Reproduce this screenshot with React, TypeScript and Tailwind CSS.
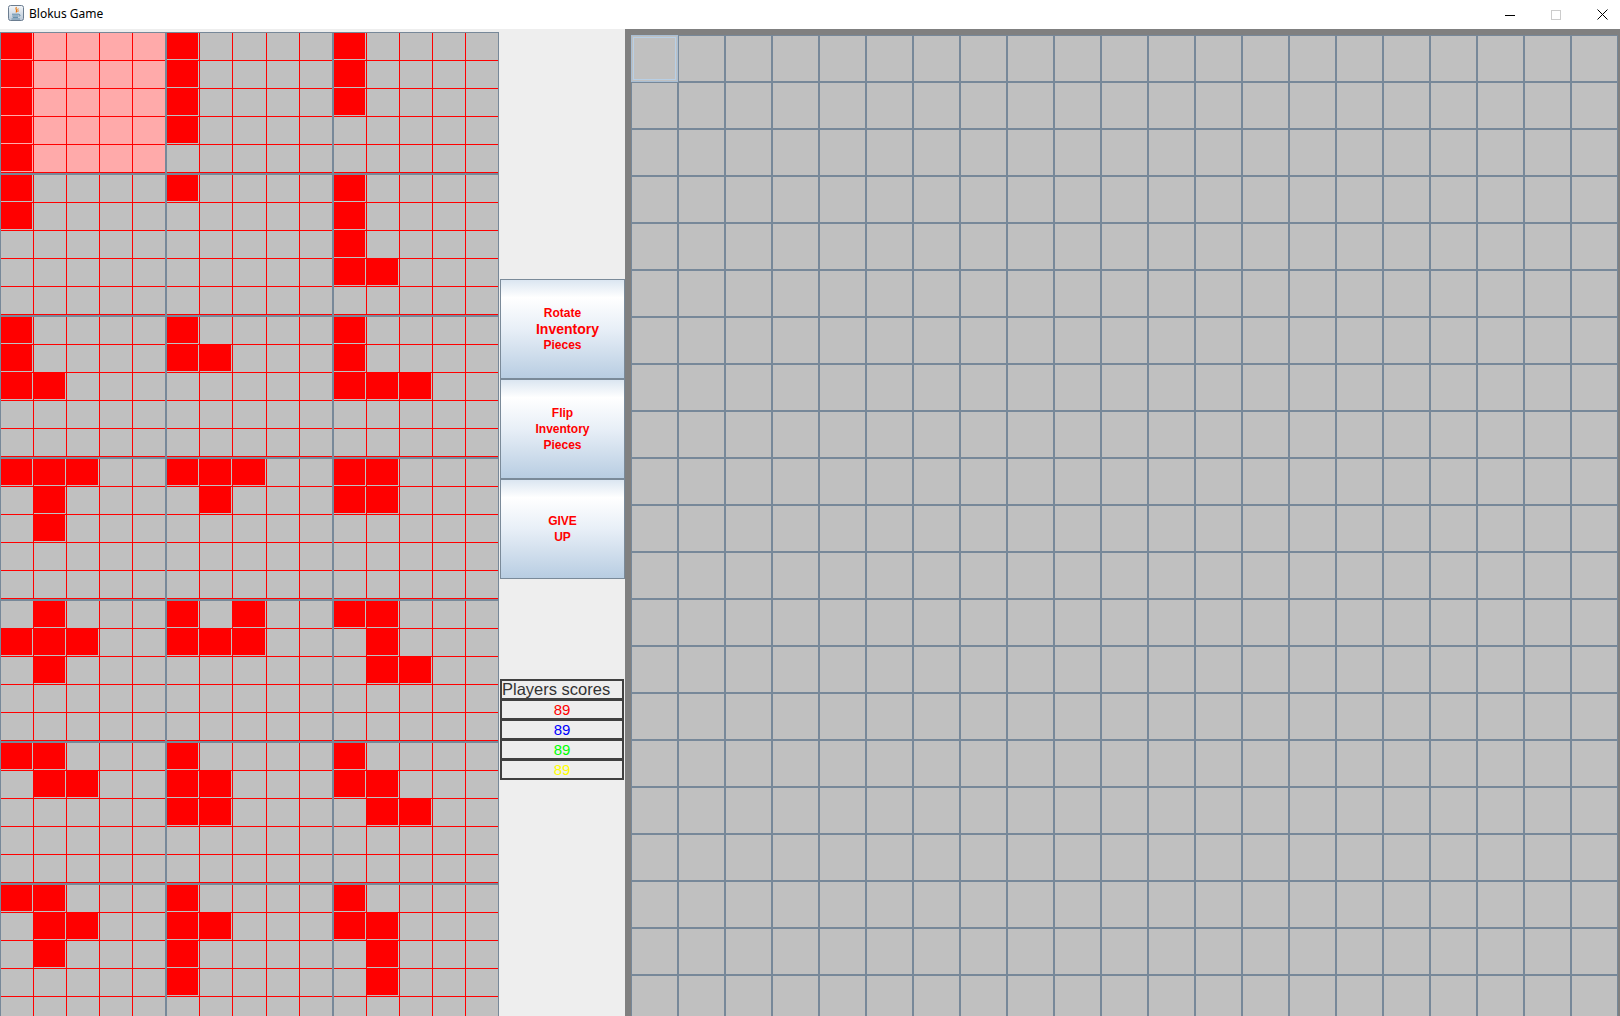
import React from "react";

const pieces: number[][][] = [
  [[0, 0], [1, 0], [2, 0], [3, 0], [4, 0]],
  [[0, 0], [1, 0], [2, 0], [3, 0]],
  [[0, 0], [1, 0], [2, 0]],
  [[0, 0], [1, 0]],
  [[0, 0]],
  [[0, 0], [1, 0], [2, 0], [3, 0], [3, 1]],
  [[0, 0], [1, 0], [2, 0], [2, 1]],
  [[0, 0], [1, 0], [1, 1]],
  [[0, 0], [1, 0], [2, 0], [2, 1], [2, 2]],
  [[0, 0], [0, 1], [0, 2], [1, 1], [2, 1]],
  [[0, 0], [0, 1], [0, 2], [1, 1]],
  [[0, 0], [0, 1], [1, 0], [1, 1]],
  [[0, 1], [1, 0], [1, 1], [1, 2], [2, 1]],
  [[0, 0], [0, 2], [1, 0], [1, 1], [1, 2]],
  [[0, 0], [0, 1], [1, 1], [2, 1], [2, 2]],
  [[0, 0], [0, 1], [1, 1], [1, 2]],
  [[0, 0], [1, 0], [1, 1], [2, 0], [2, 1]],
  [[0, 0], [1, 0], [1, 1], [2, 1], [2, 2]],
  [[0, 0], [0, 1], [1, 1], [1, 2], [2, 1]],
  [[0, 0], [1, 0], [1, 1], [2, 0], [3, 0]],
  [[0, 0], [1, 0], [1, 1], [2, 1], [3, 1]],
];

function Block({ cells, selected }: { cells: number[][]; selected: boolean }) {
  const set = new Set(cells.map(([r, c]) => r * 5 + c));
  return (
    <div className="border border-[#778899] grid grid-cols-5 grid-rows-5 gap-x-px bg-[#ff0000] overflow-hidden">
      {Array.from({ length: 25 }).map((_, i) => (
        <div
          key={i}
          className={
            "flex border-b border-[#ff0000] " +
            (selected ? "bg-[#ffaaaa]" : "bg-[#c0c0c0]")
          }
        >
          {set.has(i) && <div className="flex-1 mr-px mb-px bg-[#ff0000]" />}
        </div>
      ))}
    </div>
  );
}

function JavaIcon() {
  return (
    <svg width="16" height="16" viewBox="0 0 16 16">
      <defs>
        <linearGradient id="jg" x1="0" y1="0" x2="0" y2="1">
          <stop offset="0" stopColor="#f4f7fa" />
          <stop offset="1" stopColor="#b9c7d6" />
        </linearGradient>
      </defs>
      <rect x="0.5" y="0.5" width="15" height="15" rx="2" fill="url(#jg)" stroke="#6b7d90" />
      <path d="M8.5 2.2 C6.5 4, 10 5, 8 7.5" stroke="#e76f00" strokeWidth="1.1" fill="none" />
      <path d="M10.2 3.5 C9 5, 11 5.5, 9.6 7" stroke="#e76f00" strokeWidth="0.9" fill="none" />
      <path d="M4 9.2 h7 M11 9.5 c1.5 0 1.5 1.6 0 1.6" stroke="#5382a1" strokeWidth="0.9" fill="none" />
      <path d="M4.3 11 h6.2 M4.8 12.6 h5.2" stroke="#5382a1" strokeWidth="0.9" />
      <path d="M3.5 14 h8.5" stroke="#5382a1" strokeWidth="0.8" />
    </svg>
  );
}

function Btn({ children }: { children: React.ReactNode }) {
  return (
    <div className="h-[100px] w-[125px] border border-[#7a8a99] bg-[linear-gradient(to_bottom,#dbe6f1_0%,#ffffff_18%,#e8eff7_50%,#b8cde2_100%)] flex flex-col items-center justify-center text-[#ff0000] font-['Liberation_Sans',Arial,sans-serif] font-bold text-[12px] leading-[16px]">
      {children}
    </div>
  );
}

export default function App() {
  const scores = [
    { v: "89", c: "text-[#ff0000]" },
    { v: "89", c: "text-[#0000ff]" },
    { v: "89", c: "text-[#00ff00]" },
    { v: "89", c: "text-[#ffff00]" },
  ];
  return (
    <div className="w-[1620px] h-[1016px] overflow-hidden bg-white flex flex-col">
      <div className="h-[29px] shrink-0 bg-white flex items-center">
        <div className="ml-[8px] -mt-[3px]">
          <JavaIcon />
        </div>
        <div className="ml-[5px] -mt-[1px] text-[12px] text-black font-['Noto_Sans',sans-serif]">
          Blokus Game
        </div>
        <div className="ml-auto mr-[-5px] flex h-full">
          <div className="w-[46px] h-full flex items-center justify-center">
            <svg width="10" height="10" viewBox="0 0 10 10">
              <path d="M0 5.5 H10" stroke="#000" strokeWidth="1" />
            </svg>
          </div>
          <div className="w-[46px] h-full flex items-center justify-center">
            <svg width="10" height="10" viewBox="0 0 10 10">
              <rect x="0.5" y="0.5" width="9" height="9" fill="none" stroke="#cccccc" strokeWidth="1" />
            </svg>
          </div>
          <div className="w-[46px] h-full flex items-center justify-center">
            <svg width="11" height="11" viewBox="0 0 11 11">
              <path d="M0.5 0.5 L10.5 10.5 M10.5 0.5 L0.5 10.5" stroke="#000" strokeWidth="1" />
            </svg>
          </div>
        </div>
      </div>

      <div className="flex-1 min-h-0 flex bg-[#eeeeee] overflow-hidden">
        <div className="w-[499px] shrink-0 pt-[3px]">
          <div className="grid grid-cols-3 grid-rows-[repeat(7,142px)]">
            {pieces.map((p, i) => (
              <Block key={i} cells={p} selected={i === 0} />
            ))}
          </div>
        </div>

        <div className="w-[126px] shrink-0 flex flex-col pt-[250px] pl-[1px]">
          <Btn>
            <span>Rotate</span>
            <span className="text-[14px] pl-[10px]">Inventory</span>
            <span>Pieces</span>
          </Btn>
          <Btn>
            <span>Flip</span>
            <span>Inventory</span>
            <span>Pieces</span>
          </Btn>
          <Btn>
            <span>GIVE</span>
            <span>UP</span>
          </Btn>

          <div className="mt-[100px] w-[124px] bg-[#404040] p-[2px] flex flex-col gap-[3px]">
            <div className="h-[17px] bg-[#eeeeee] overflow-hidden text-[16.5px] leading-[17px] text-[#333333] font-['Liberation_Sans',Arial,sans-serif] whitespace-nowrap">
              Players scores
            </div>
            {scores.map((s, i) => (
              <div
                key={i}
                className={
                  "h-[17px] bg-[#eeeeee] flex items-center justify-center text-[15px] leading-[17px] font-['Liberation_Sans',Arial,sans-serif] " +
                  s.c
                }
              >
                {s.v}
              </div>
            ))}
          </div>
        </div>

        <div className="flex-1 min-w-0 bg-[#808080] pt-[6px] pl-[6px] overflow-hidden">
          <div className="grid grid-cols-[repeat(21,47px)] grid-rows-[repeat(21,47px)]">
            {Array.from({ length: 441 }).map((_, i) => (
              <div
                key={i}
                className={
                  i === 0
                    ? "bg-[#c0c0c0] border border-[#a9bed3] shadow-[inset_0_0_0_1px_#c0c0c0,inset_0_0_0_2px_#b8cfe5]"
                    : "bg-[#c0c0c0] border border-[#778899]"
                }
              />
            ))}
          </div>
        </div>
      </div>
    </div>
  );
}
